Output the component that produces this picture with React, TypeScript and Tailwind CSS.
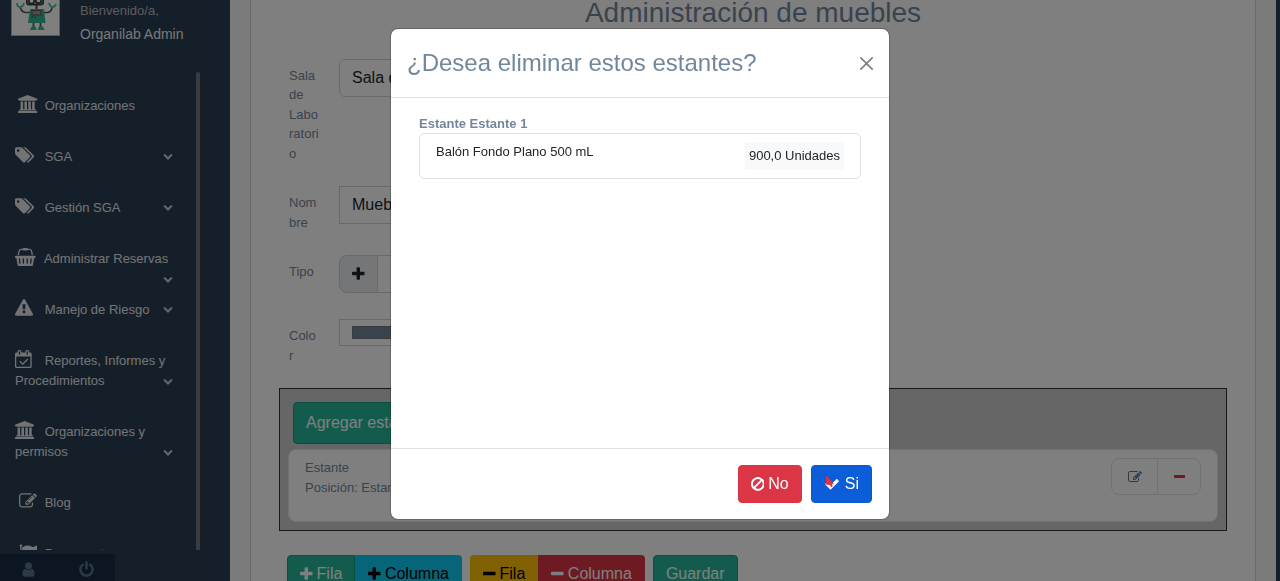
import React from 'react';

type GlyphName =
  | 'university'
  | 'tags'
  | 'basket'
  | 'warning'
  | 'calendar'
  | 'edit'
  | 'flag'
  | 'user'
  | 'power'
  | 'chevron'
  | 'plus'
  | 'minus'
  | 'ban';

const glyphs: Record<GlyphName, { box: string; d: string }> = {
  university: {
    box: '0 0 1920 1792',
    d: 'M960 0l960 384v128h-128q0 26-20.5 45t-48.5 19h-1526q-28 0-48.5-19t-20.5-45h-128v-128zm-704 640h256v768h128v-768h256v768h128v-768h256v768h128v-768h256v768h59q28 0 48.5 19t20.5 45v64h-1664v-64q0-26 20.5-45t48.5-19h59v-768zm1595 960q28 0 48.5 19t20.5 45v128h-1920v-128q0-26 20.5-45t48.5-19h1782z',
  },
  tags: {
    box: '0 0 1920 1792',
    d: 'M448 448q0-53-37.5-90.5t-90.5-37.5-90.5 37.5-37.5 90.5 37.5 90.5 90.5 37.5 90.5-37.5 37.5-90.5zm1067 576q0 53-37 90l-491 492q-39 37-91 37-53 0-90-37l-715-716q-38-37-64.5-101t-26.5-117v-416q0-52 38-90t90-38h416q53 0 117 26.5t102 64.5l715 714q37 39 37 91zm384 0q0 53-37 90l-491 492q-39 37-91 37-36 0-59-14t-53-45l470-470q37-37 37-90 0-52-37-91l-715-714q-38-38-102-64.5t-117-26.5h224q53 0 117 26.5t102 64.5l715 714q37 39 37 91z',
  },
  basket: {
    box: '0 0 2048 1792',
    d: 'M1920 768q53 0 90.5 37.5t37.5 90.5-37.5 90.5-90.5 37.5h-15l-115 662q-8 46-44 76t-82 30h-1280q-46 0-82-30t-44-76l-115-662h-15q-53 0-90.5-37.5t-37.5-90.5 37.5-90.5 90.5-37.5h1792zm-1435 800q26-2 43.5-22.5t15.5-46.5l-32-416q-2-26-22.5-43.5t-46.5-15.5-43.5 22.5-15.5 46.5l32 416q2 25 20.5 42t43.5 17h5zm411-64v-416q0-26-19-45t-45-19-45 19-19 45v416q0 26 19 45t45 19 45-19 19-45zm384 0v-416q0-26-19-45t-45-19-45 19-19 45v416q0 26 19 45t45 19 45-19 19-45zm352 5l32-416q2-26-15.5-46.5t-43.5-22.5-46.5 15.5-22.5 43.5l-32 416q-2 26 15.5 46.5t43.5 22.5h5q25 0 43.5-17t20.5-42zm-1156-1217l-93 412h-132l101-441q19-88 89-143.5t160-55.5h167q0-26 19-45t45-19h384q26 0 45 19t19 45h167q90 0 160 55.5t89 143.5l101 441h-132l-93-412q-11-44-45.5-72t-79.5-28h-167q0 26-19 45t-45 19h-384q-26 0-45-19t-19-45h-167q-45 0-79.5 28t-45.5 72z',
  },
  warning: {
    box: '0 0 1792 1792',
    d: 'M1024 1375v-190q0-14-9.5-23.5t-22.5-9.5h-192q-13 0-22.5 9.5t-9.5 23.5v190q0 14 9.5 23.5t22.5 9.5h192q13 0 22.5-9.5t9.5-23.5zm-2-374l18-459q0-12-10-19-13-11-24-11h-220q-11 0-24 11-10 7-10 21l17 457q0 10 10 16.5t24 6.5h185q14 0 23.5-6.5t10.5-16.5zm-14-934l768 1408q35 63-2 126-17 29-46.5 46t-63.5 17h-1536q-34 0-63.5-17t-46.5-46q-37-63-2-126l768-1408q17-31 47-49t65-18 65 18 47 49z',
  },
  calendar: {
    box: '0 0 1664 1792',
    d: 'M1303 964l-512 512q-10 9-23 9t-23-9l-288-288q-9-10-9-23t9-22l46-46q9-9 22-9t23 9l220 220 444-444q10-9 23-9t22 9l46 46q9 9 9 22t-9 23zm-1175 700h1408v-1024h-1408v1024zm384-1216v-288q0-14-9-23t-23-9h-64q-14 0-23 9t-9 23v288q0 14 9 23t23 9h64q14 0 23-9t9-23zm768 0v-288q0-14-9-23t-23-9h-64q-14 0-23 9t-9 23v288q0 14 9 23t23 9h64q14 0 23-9t9-23zm384-64v1280q0 52-38 90t-90 38h-1408q-52 0-90-38t-38-90v-1280q0-52 38-90t90-38h128v-96q0-66 47-113t113-47h64q66 0 113 47t47 113v96h384v-96q0-66 47-113t113-47h64q66 0 113 47t47 113v96h128q52 0 90 38t38 90z',
  },
  edit: {
    box: '0 0 1792 1792',
    d: 'M888 1184l116-116-152-152-116 116v56h96v96h56zm440-720q-16-16-33 1l-350 350q-17 17-1 33t33-1l350-350q17-17 1-33zm80 594v190q0 119-84.5 203.5t-203.5 84.5h-832q-119 0-203.5-84.5t-84.5-203.5v-832q0-119 84.5-203.5t203.5-84.5h832q63 0 117 25 15 7 18 23 3 17-9 29l-49 49q-14 14-32 8-23-6-45-6h-832q-66 0-113 47t-47 113v832q0 66 47 113t113 47h832q66 0 113-47t47-113v-126q0-13 9-22l64-64q15-15 35-7t20 29zm-96-738l288 288-672 672h-288v-288zm444 132l-92 92-288-288 92-92q28-28 68-28t68 28l152 152q28 28 28 68t-28 68z',
  },
  flag: {
    box: '0 0 1792 1792',
    d: 'M320 256q0 72-64 110v1266q0 13-9.5 22.5t-22.5 9.5h-64q-13 0-22.5-9.5t-9.5-22.5v-1266q-64-38-64-110 0-53 37.5-90.5t90.5-37.5 90.5 37.5 37.5 90.5zm1472 64v763q0 25-12.5 38.5t-39.5 27.5q-215 116-369 116-61 0-123.5-22t-108.5-48-115.5-48-142.5-22q-192 0-464 146-17 9-33 9-26 0-45-19t-19-45v-742q0-32 31-55 21-14 79-43 236-120 421-120 107 0 200 29t219 88q38 19 88 19 54 0 117.5-21t110-47 88-47 54.5-21q26 0 45 19t19 45z',
  },
  user: {
    box: '0 0 1792 1792',
    d: 'M1536 1399q0 109-62.5 187t-150.5 78h-854q-88 0-150.5-78t-62.5-187q0-85 8.5-160.5t31.5-152 58.5-131 94-89 134.5-34.5q131 128 313 128t313-128q76 0 134.5 34.5t94 89 58.5 131 31.5 152 8.5 160.5zm-256-887q0 159-112.5 271.5t-271.5 112.5-271.5-112.5-112.5-271.5 112.5-271.5 271.5-112.5 271.5 112.5 112.5 271.5z',
  },
  power: {
    box: '0 0 1792 1792',
    d: 'M1664 896q0 156-61 298t-164 245-245 164-298 61-298-61-245-164-164-245-61-298q0-182 80.5-343t226.5-270q43-32 95.5-25t83.5 50q32 42 24.5 94.5t-49.5 84.5q-98 74-151.5 181t-53.5 228q0 104 40.5 198.5t109.5 163.5 163.5 109.5 198.5 40.5 198.5-40.5 163.5-109.5 109.5-163.5 40.5-198.5q0-121-53.5-228t-151.5-181q-42-32-49.5-84.5t24.5-94.5q31-43 84-50t95 25q146 109 226.5 270t80.5 343zm-640-768v640q0 52-38 90t-90 38-90-38-38-90v-640q0-52 38-90t90-38 90 38 38 90z',
  },
  chevron: {
    box: '0 0 1792 1792',
    d: 'M1683 808l-742 741q-19 19-45 19t-45-19l-742-741q-19-19-19-45.5t19-45.5l166-165q19-19 45-19t45 19l531 531 531-531q19-19 45-19t45 19l166 165q19 19 19 45.5t-19 45.5z',
  },
  plus: {
    box: '192 0 1408 1792',
    d: 'M1600 736v192q0 40-28 68t-68 28h-416v416q0 40-28 68t-68 28h-192q-40 0-68-28t-28-68v-416h-416q-40 0-68-28t-28-68v-192q0-40 28-68t68-28h416v-416q0-40 28-68t68-28h192q40 0 68 28t28 68v416h416q40 0 68 28t28 68z',
  },
  minus: {
    box: '192 0 1408 1792',
    d: 'M1600 736v192q0 40-28 68t-68 28h-1216q-40 0-68-28t-28-68v-192q0-40 28-68t68-28h1216q40 0 68 28t28 68z',
  },
  ban: {
    box: '128 0 1536 1792',
    d: 'M1440 893q0-161-87-295l-754 753q137 89 297 89 111 0 211.5-43.5t173.5-116.5 116-174.5 43-212.5zm-999 299l755-754q-135-91-300-91-148 0-273 73t-198 199-73 274q0 162 89 299zm1223-299q0 157-61 300t-163.5 246-245 164-298.5 61-298.5-61-245-164-163.5-246-61-300 61-299.5 163.5-245.5 245-164 298.5-61 298.5 61 245 164 163.5 245.5 61 299.5z',
  },
};

function Glyph({ name, className }: { name: GlyphName; className: string }) {
  return (
    <svg viewBox={glyphs[name].box} className={className} fill="currentColor" aria-hidden="true">
      <path d={glyphs[name].d} />
    </svg>
  );
}

const menu: { icon: GlyphName; label: string; children: boolean }[] = [
  { icon: 'university', label: 'Organizaciones', children: false },
  { icon: 'tags', label: 'SGA', children: true },
  { icon: 'tags', label: 'Gestión SGA', children: true },
  { icon: 'basket', label: 'Administrar Reservas', children: true },
  { icon: 'warning', label: 'Manejo de Riesgo', children: true },
  { icon: 'calendar', label: 'Reportes, Informes y Procedimientos', children: true },
  { icon: 'university', label: 'Organizaciones y permisos', children: true },
  { icon: 'edit', label: 'Blog', children: false },
  { icon: 'flag', label: 'Documentos', children: false },
];

function Avatar() {
  return (
    <svg viewBox="0 0 47 35" className="h-9 w-[49px] border border-t-0 border-[#a9b4be] bg-white" aria-hidden="true">
      <rect x="14" y="-8" width="18" height="13.500" rx="3" fill="#3f3f3f" />
      <rect x="15.500" y="-6" width="15" height="10" rx="2" fill="#4dbfa6" />
      <circle cx="19.500" cy="1" r="2.600" fill="#fff" stroke="#333" strokeWidth="1.500" />
      <circle cx="26.500" cy="0.500" r="2.600" fill="#fff" stroke="#333" strokeWidth="1.500" />
      <path d="M24.500 5v5" stroke="#444" strokeWidth="2" />
      <path d="M18 12.500h-5q-4-1-5-6M31 12.500h5q4-1 4-6" fill="none" stroke="#555" strokeWidth="1.600" />
      <path d="M5 3q0 4 3 4t4-4M37 3q1 4 3.500 4t3.500-3" fill="none" stroke="#4dbfa6" strokeWidth="1.800" />
      <path d="M18 9h14l1.500 14H16z" fill="#35b597" />
      <rect x="20" y="10.500" width="9" height="4.500" fill="#9a9a9a" stroke="#555" strokeWidth="1" />
      <path d="M19.500 17h1.500M22.500 17h1.500" stroke="#333" strokeWidth="1.200" />
      <path d="M21.500 23v4M28.500 23v4" stroke="#555" strokeWidth="1.800" />
      <path d="M18 30q1-4 4-4 2 0 2.500 4zM26 30q0-4 2.500-4 3 0 4 4z" fill="#35b597" />
    </svg>
  );
}

function Sidebar() {
  return (
    <aside className="flex w-[230px] shrink-0 flex-col bg-[#2a3f54] text-[#e7e7e7]">
      <div className="flex h-[72px] shrink-0 gap-5 pl-[11px]">
        <Avatar />
        <div>
          <p className="leading-[21px] text-[#bab8b8]">Bienvenido/a,</p>
          <h2 className="text-sm leading-[26px] text-[#ecf0f1]">Organilab Admin</h2>
        </div>
      </div>
      <div className="flex min-h-0 flex-1">
        <nav className="w-49 overflow-hidden pt-2 leading-5">
          {menu.map((item) => (
            <a key={item.label} href="#" className="block py-[15px] pr-[23px] pl-[15px]">
              <span className={item.children ? 'inline-flex w-[26px] align-[-3px]' : 'inline-flex w-[26px] justify-center align-[-3px]'}>
                <Glyph name={item.icon} className="h-[18px] w-auto" />
              </span>{' '}
              {item.label}
              {item.children && <Glyph name="chevron" className="float-right mt-[5px] h-[10px] w-[10px] text-[#c4cfda]" />}
            </a>
          ))}
        </nav>
        <div className="w-1 rounded-t-sm bg-[#76787f]" />
      </div>
      <div className="mt-1 flex h-[27px] w-1/2 shrink-0 overflow-hidden bg-[#172d44] text-[#5a738e]">
        <button type="button" aria-label="Perfil" className="flex flex-1 justify-center pt-[7px]">
          <Glyph name="user" className="size-[17px]" />
        </button>
        <button type="button" aria-label="Salir" className="flex flex-1 justify-center pt-[7px]">
          <Glyph name="power" className="size-[17px]" />
        </button>
      </div>
    </aside>
  );
}

function Field({ id, label, className, children }: { id: string; label: string; className?: string; children: React.ReactNode }) {
  return (
    <div className={className ? 'flex items-start gap-[19px] ' + className : 'flex items-start gap-[19px]'}>
      <label htmlFor={id} className="w-[31px] py-[7px] break-words">
        {label}
      </label>
      <div className="w-[400px]">{children}</div>
    </div>
  );
}

function FurnitureForm() {
  return (
    <main className="flex-1 overflow-hidden bg-[#f7f7f7] px-5">
      <div className="flow-root h-full border-x border-[#d4d4d4] bg-white px-7">
        <h1 className="-mt-1 mb-[29px] text-center text-[28px] leading-[1.2]">Administración de muebles</h1>
        <form onSubmit={(e) => e.preventDefault()}>
          <div className="mb-4 flex flex-col gap-4 px-[10px]">
            <Field id="sala" label="Sala de Laboratorio">
              <select id="sala" className="h-[38px] w-full appearance-none rounded-md border border-[#ced4da] bg-white px-3 text-base text-[#212529]">
                <option>Sala de Laboratorio</option>
              </select>
            </Field>
            <Field id="nombre" label="Nombre">
              <input id="nombre" defaultValue="Mueble 1" className="h-[38px] w-full border border-[#ced4da] bg-white px-3 text-base text-[#212529]" />
            </Field>
            <Field id="tipo" label="Tipo">
              <div className="flex h-[38px]">
                <button type="button" aria-label="Agregar tipo" className="flex w-[39px] items-center justify-center rounded-l-lg border border-[#ced4da] bg-[#e9ecef] text-[#212529]">
                  <Glyph name="plus" className="h-4 w-auto" />
                </button>
                <select id="tipo" className="-ml-px flex-1 appearance-none border border-[#ced4da] bg-white px-3 text-base text-[#212529]">
                  <option>Estante</option>
                </select>
              </div>
            </Field>
            <Field id="color" label="Color" className="mt-[10px]">
              <input
                id="color"
                type="color"
                defaultValue="#73879c"
                className="block h-[27px] w-full border border-[#ced4da] bg-white px-3 py-[6px] [&::-webkit-color-swatch]:border-[#777777] [&::-webkit-color-swatch-wrapper]:p-0"
              />
            </Field>
          </div>
          <section className="border border-[#333333] bg-[#cccccc] p-2">
            <button type="button" className="m-[5px] block h-[42px] rounded-sm border border-[#169f85] bg-[#26b99a] px-3 text-base text-white">
              Agregar estante
            </button>
            <div className="flex items-start justify-between rounded-lg border border-[#e5e5e5] bg-white px-4 py-2">
              <p className="mb-4">
                Estante
                <br />
                Posición: Estante 1
              </p>
              <div className="flex h-[37px] rounded-lg border border-[#dee2e6]">
                <button type="button" aria-label="Editar" className="flex w-[46px] items-center justify-center border-r border-[#dee2e6] text-[#5a738e]">
                  <Glyph name="edit" className="size-[14px]" />
                </button>
                <button type="button" aria-label="Eliminar" className="flex w-[42px] items-center justify-center text-[#dc3545]">
                  <Glyph name="minus" className="h-[14px] w-auto" />
                </button>
              </div>
            </div>
          </section>
          <div className="mt-6 flex gap-2 px-2 text-base">
            <div className="flex">
              <button type="button" className="flex h-[38px] items-center gap-1 rounded-l-sm border border-[#169f85] bg-[#26b99a] px-3 text-white">
                <Glyph name="plus" className="h-4 w-auto" />
                Fila
              </button>
              <button type="button" className="flex h-[38px] items-center gap-1 rounded-r-sm bg-[#0dcaf0] px-[13px] text-black">
                <Glyph name="plus" className="h-4 w-auto" />
                Columna
              </button>
            </div>
            <div className="flex">
              <button type="button" className="flex h-[38px] items-center gap-1 rounded-l-sm bg-[#ffc107] px-[13px] text-black">
                <Glyph name="minus" className="h-4 w-auto" />
                Fila
              </button>
              <button type="button" className="flex h-[38px] items-center gap-1 rounded-r-sm bg-[#dc3545] px-[13px] text-white">
                <Glyph name="minus" className="h-4 w-auto" />
                Columna
              </button>
            </div>
            <button type="submit" className="h-[38px] rounded-sm border border-[#169f85] bg-[#26b99a] px-3 text-white">
              Guardar
            </button>
          </div>
        </form>
      </div>
    </main>
  );
}

function ConfirmDialog() {
  return (
    <div className="fixed inset-0 flex items-start justify-center bg-black/50 pt-7">
      <div
        role="dialog"
        aria-modal="true"
        aria-labelledby="dialog-title"
        className="w-full max-w-[500px] rounded-lg border border-black/20 bg-white bg-clip-padding"
      >
        <header className="flex items-center justify-between border-b border-[#dee2e6] p-4">
          <h2 id="dialog-title" className="text-2xl leading-normal">
            ¿Desea eliminar estos estantes?
          </h2>
          <button type="button" aria-label="Cerrar" className="text-black/50">
            <svg viewBox="0 0 16 16" className="size-[13px]" fill="currentColor" aria-hidden="true">
              <path d="M.293.293a1 1 0 0 1 1.414 0L8 6.586 14.293.293a1 1 0 1 1 1.414 1.414L9.414 8l6.293 6.293a1 1 0 0 1-1.414 1.414L8 9.414l-6.293 6.293a1 1 0 0 1-1.414-1.414L6.586 8 .293 1.707a1 1 0 0 1 0-1.414z" />
            </svg>
          </button>
        </header>
        <div className="min-h-[350px] px-7 py-4">
          <h3 className="leading-[19px] font-bold">Estante Estante 1</h3>
          <ul className="rounded-md border border-[#dee2e6] text-[#212529]">
            <li className="flex items-start justify-between px-4 py-2">
              <span>Balón Fondo Plano 500 mL</span>
              <span className="bg-[#f8f9fa] p-1">900,0 Unidades</span>
            </li>
          </ul>
        </div>
        <footer className="flex justify-end gap-[9px] border-t border-[#dee2e6] py-4 pr-[17px] text-base text-white">
          <button type="button" className="flex h-[38px] items-center gap-1 rounded-sm border border-[#dc3545] bg-[#dc3545] px-3">
            <Glyph name="ban" className="h-4 w-auto" />
            No
          </button>
          <button type="button" className="flex h-[38px] items-center gap-[5px] rounded-sm border border-[#0a58ca] bg-[#0b5ed7] px-3">
            <svg viewBox="0 0 16 16" className="size-4" aria-hidden="true">
              <path d="M2 7.200L6.500 11.500L14 4" fill="none" stroke="#fff" strokeWidth="3.200" />
              <path d="M1.800-.5L9.800 7.500L8 8.300L8.800 10.300L7 11.200L6 9L.8 8.500L2.200 7.300z" fill="#dc3545" />
            </svg>
            Si
          </button>
        </footer>
      </div>
    </div>
  );
}

export default function App() {
  return (
    <div className="font-['Liberation_Sans',Arial,sans-serif] text-[13px] leading-normal text-[#73879c]">
      <div className="flex h-screen overflow-hidden bg-[#2a3f54] pr-1">
        <Sidebar />
        <FurnitureForm />
      </div>
      <ConfirmDialog />
    </div>
  );
}
